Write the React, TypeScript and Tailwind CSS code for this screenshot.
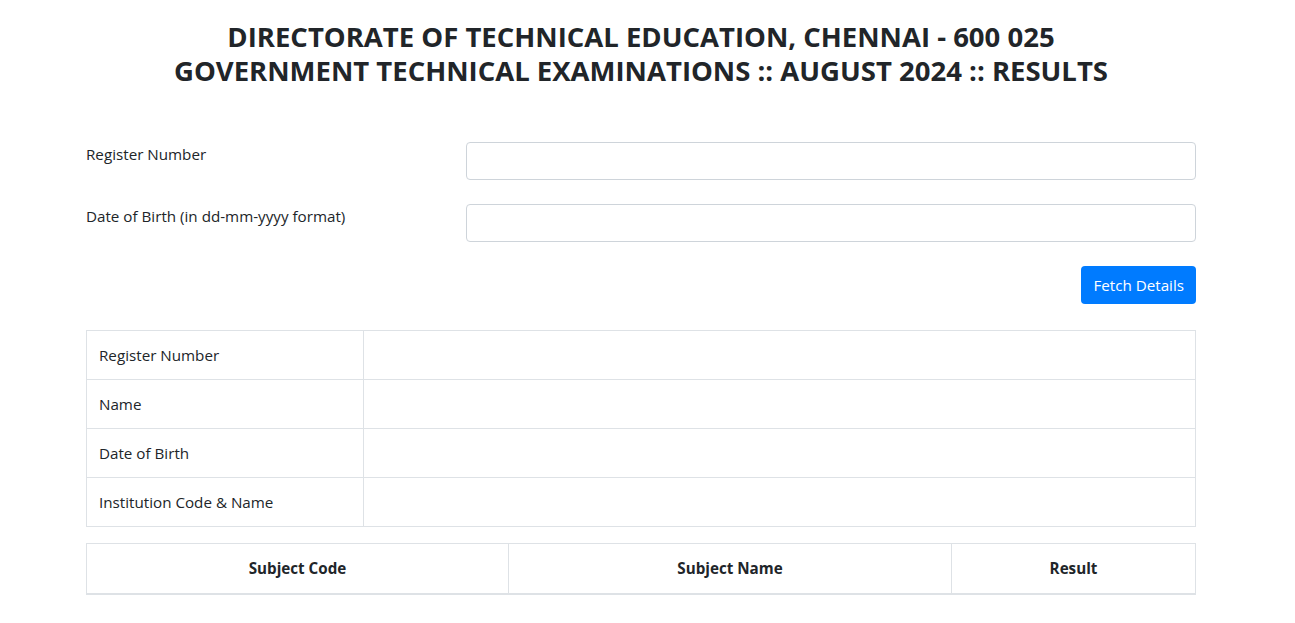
import React from "react";

const font = { fontFamily: '"Open Sans", "Noto Sans", Arial, sans-serif' };

const details = ["Register Number", "Name", "Date of Birth", "Institution Code & Name"];

export default function App() {
  return (
    <div className="min-h-screen bg-white text-[#212529]" style={font}>
      <div className="ml-[86px] w-[1110px] pt-[20px]">
        {/* Heading */}
        <h3 className="text-center text-[27.5px] font-bold leading-[34px] text-[#212529]">
          DIRECTORATE OF TECHNICAL EDUCATION, CHENNAI - 600 025
          <br />
          GOVERNMENT TECHNICAL EXAMINATIONS :: AUGUST 2024 :: RESULTS
        </h3>

        {/* Form */}
        <form className="mt-[54px]" onSubmit={(e) => e.preventDefault()}>
          <div className="mb-6 flex">
            <label className="w-[380px] text-[15.2px] leading-6">Register Number</label>
            <input
              type="text"
              className="h-[38px] w-[730px] rounded border border-[#ced4da] px-3 text-base outline-none"
            />
          </div>
          <div className="mb-6 flex">
            <label className="w-[380px] text-[15.2px] leading-6">Date of Birth (in dd-mm-yyyy format)</label>
            <input
              type="text"
              className="h-[38px] w-[730px] rounded border border-[#ced4da] px-3 text-base outline-none"
            />
          </div>
          <div className="flex justify-end">
            <button
              type="submit"
              className="h-[38px] rounded bg-[#007bff] px-3 text-[15.2px] text-white"
            >
              Fetch Details
            </button>
          </div>
        </form>

        {/* Candidate details */}
        <table className="mt-[26px] mb-4 w-full border-collapse text-[15.2px]">
          <tbody>
            {details.map((d) => (
              <tr key={d} className="h-[49px]">
                <td className="w-[277px] border border-[#dee2e6] px-3 align-middle">{d}</td>
                <td className="border border-[#dee2e6] px-3"></td>
              </tr>
            ))}
          </tbody>
        </table>

        {/* Subjects */}
        <table className="w-full border-collapse text-[15.2px]">
          <thead>
            <tr className="h-[50px]">
              <th className="w-[422px] border border-b-2 border-[#dee2e6] font-bold">Subject Code</th>
              <th className="w-[443px] border border-b-2 border-[#dee2e6] font-bold">Subject Name</th>
              <th className="border border-b-2 border-[#dee2e6] font-bold">Result</th>
            </tr>
          </thead>
        </table>
      </div>
    </div>
  );
}
